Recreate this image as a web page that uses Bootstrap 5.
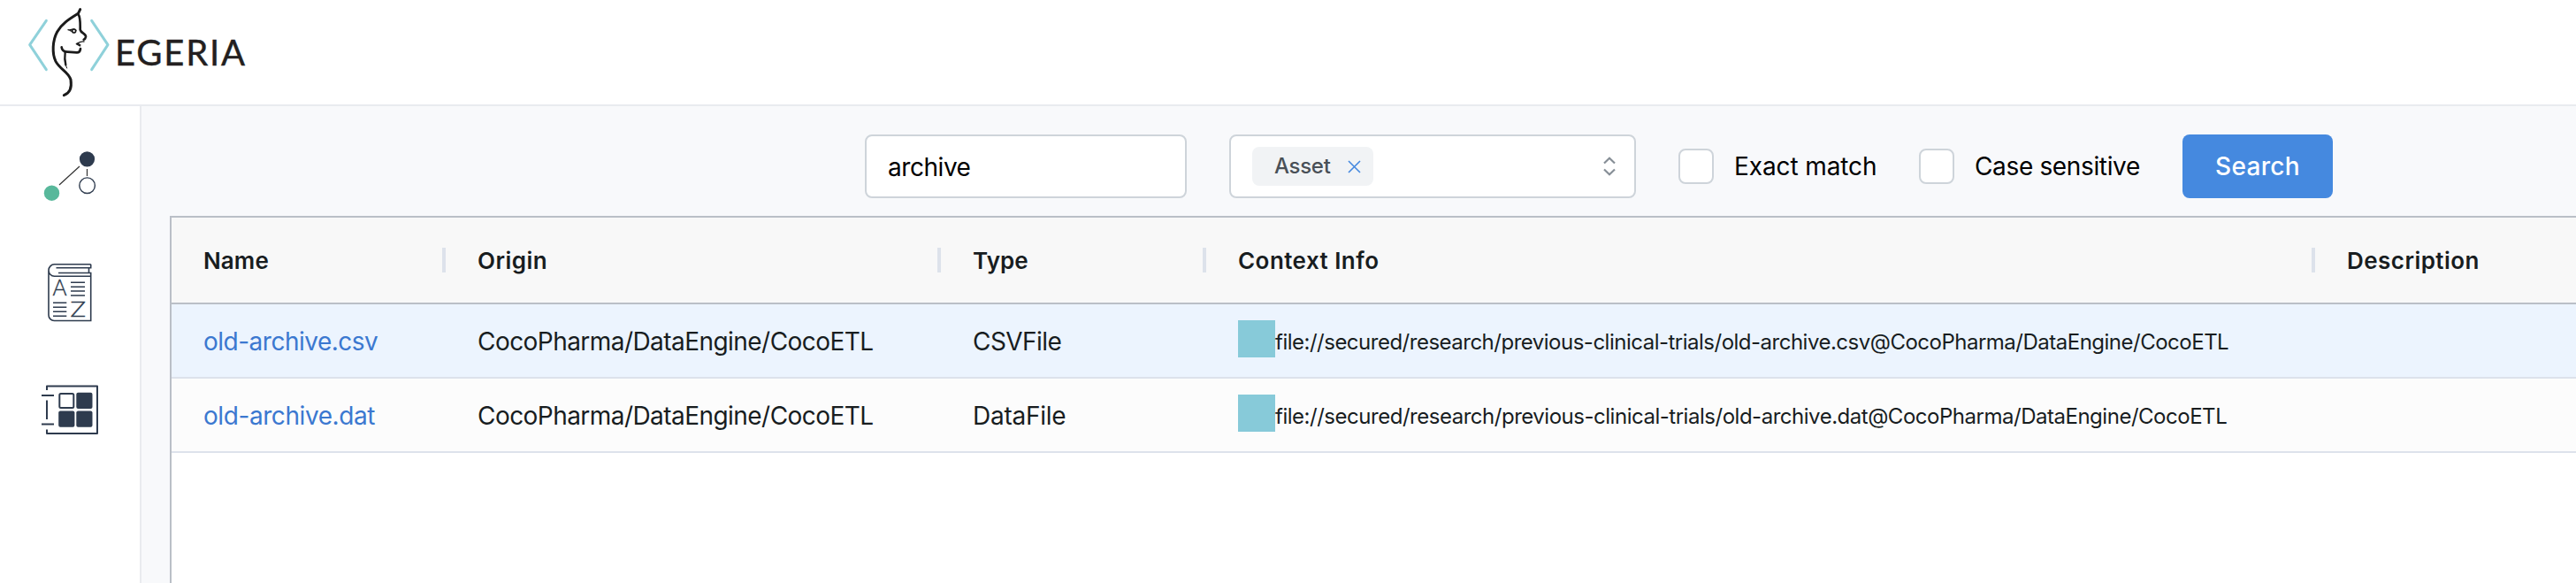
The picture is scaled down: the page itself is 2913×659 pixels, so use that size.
<!DOCTYPE html>
<html lang="en">
<head>
<meta charset="utf-8">
<meta name="viewport" content="width=device-width, initial-scale=1">
<title>Egeria</title>
<link href="https://cdn.jsdelivr.net/npm/bootstrap@5.3.0/dist/css/bootstrap.min.css" rel="stylesheet">
<script src="https://cdn.jsdelivr.net/npm/bootstrap@5.3.0/dist/js/bootstrap.bundle.min.js"></script>
<style>
  body { font-family: Inter, "Liberation Sans", sans-serif; font-size: 28px; line-height: 40px; letter-spacing: -.5px; color: #000; overflow: hidden; }
  .topbar { height: 120px; border-bottom: 2px solid #e9ebef; padding: 7px 0 0 30px; }
  .wordmark { font: 400 40px/48px Lato, sans-serif; letter-spacing: 1.8px; color: #231f20; margin: 28px 0 0 4px; -webkit-text-stroke: .4px #231f20; }
  .sidebar { width: 160px; border-right: 2px solid #e9ebef; }
  .content-area { background: #f8f9fb; padding: 32px 0 0 32px; }
  .filters { height: 92px; padding-left: 786px; }
  .filters .form-control { width: 364px; height: 72px; border: 2px solid #ced4da; border-radius: 8px; padding: 2px 24px 0; font-size: 28px; letter-spacing: -.45px; color: #000; margin-right: 48px; }
  .type-select { width: 460px; height: 72px; border: 2px solid #ced4da; border-radius: 8px; padding: 0 20px 0 24px; margin-right: 48px; background: #fff; }
  .chip { height: 44px; width: 137px; border-radius: 8px; background: #f1f3f5; color: #495057; font-size: 24px; font-weight: 500; letter-spacing: -.3px; padding: 0 14px 0 25px; }
  .check-label { height: 72px; }
  .check-exact { width: 272px; letter-spacing: -.1px; }
  .check-case { width: 298px; letter-spacing: -.35px; }
  .filters .form-check-input { width: 40px; height: 40px; margin: 0 23px 0 0; border: 2px solid #ced4da; border-radius: 8px; background: #fff; }
  .btn-search { width: 170px; height: 72px; border-radius: 8px; border: 0; background: #4589df; color: #fff; font-size: 28px; font-weight: 500; letter-spacing: .35px; padding: 0; }
  .btn-search:hover { background: #3a7cd0; color: #fff; }
  .grid-panel { background: #fff; border: 2px solid #babfc7; border-width: 2px 0 0 2px; }
  .asset-grid { table-layout: fixed; border-collapse: separate; border-spacing: 0; --bs-table-bg: transparent; }
  .asset-grid th, .asset-grid td { padding: 0 36px; vertical-align: middle; white-space: nowrap; color: #181d1f; }
  .asset-grid th { height: 98px; background: #f8f8f8; border-bottom: 2px solid #babfc7; font-size: 26px; font-weight: 600; letter-spacing: .45px; padding-right: 0; }
  .asset-grid th span { padding-top: 2px; }
  .asset-grid th.tight { letter-spacing: .1px; }
  .asset-grid td { height: 84px; background: #fcfcfc; border-bottom: 2px solid #dde2eb; letter-spacing: -.55px; padding-top: 2px; }
  .asset-grid td.loose { letter-spacing: -.25px; }
  .asset-grid .hovered td { background: #ecf4fe; }
  .asset-grid a { color: #3b78d0; text-decoration: none; letter-spacing: -.5px; }
  .asset-grid .plain a { letter-spacing: -.42px; }
  .asset-grid .plain .path-text { letter-spacing: -.48px; }
  .col-sep { width: 4px; height: 28px; background: #dde2eb; }
  .swatch { width: 42px; height: 42px; background: #87cad9; margin-bottom: 6px; }
  .path-text { font-size: 24px; letter-spacing: -.5px; padding-top: 2px; }
</style>
</head>
<body class="vh-100 d-flex flex-column">

<header class="topbar d-flex align-items-start bg-white flex-shrink-0">
  <svg width="96" height="103" viewBox="90 21 288 309" fill="none" stroke-linecap="round" stroke-linejoin="round">
    <g stroke="#8fd1da" stroke-width="9">
      <path d="M157 70 101 152 157 236M311 70 366 152 311 236"/>
    </g>
    <g stroke="#1b1b1b" stroke-width="8">
      <path stroke-width="9" d="M272 32 265 46C238 63 210 79 194 108C178 137 176 182 189 208C204 236 233 244 240 270C244 296 236 316 217 323"/>
      <path d="M265 47C274 60 272 83 272 101C275 114 292 113 291 125C290 130 287 133 284 134"/>
      <path stroke-width="4" d="M285 141C277 140 268 143 259 149L271 156"/>
      <path d="M264 148 272 153" stroke-width="5"/>
      <path d="M273 165C272 173 270 178 261 178L229 176C218 176 210 170 209 160"/>
      <path stroke-width="7" d="M221 178C219 192 220 208 223 220"/>
      <path stroke-width="3" d="M222 218 227 231"/>
      <path stroke-width="4" d="M231 101C240 104 250 93 258 103M237 103 244 106"/>
      <circle cx="251" cy="105" r="6" stroke-width="5"/>
    </g>
  </svg>
  <span class="wordmark">EGERIA</span>
</header>

<div class="d-flex flex-grow-1">
  <nav class="sidebar bg-white flex-shrink-0">
    <svg width="158" height="390" viewBox="0 120 158 390" fill="none" stroke="#2e3b4e" class="d-block">
      <!-- lineage -->
      <circle cx="98.5" cy="179.8" r="8.6" fill="#2e3b4e" stroke="none"/>
      <circle cx="58.5" cy="218.2" r="8.7" fill="#58b89b" stroke="none"/>
      <circle cx="98.6" cy="209.7" r="8.8" stroke-width="1.4"/>
      <path d="M67 209 90 188M98.5 191v8" stroke="#333" stroke-width="1.2"/>
      <!-- glossary -->
      <path stroke-width="1.6" d="M102.7 298.8H61.5A6.7 6.7 0 0 0 55 305.5V356a6.3 6.3 0 0 0 6.5 6.5h41.2V308.5H66M102.7 298.8v4H63.5M100.5 303v5M102.7 312.3H61.5A6.7 6.7 0 0 1 55 305.5"/>
      <path stroke-width="1.6" d="M80 319.2h16M80 324.2h16M80 329h16M80 334h16M60 342.3h15.3M60 347.3h15.3M60 352.2h15.3M60 357.2h15.3"/>
      <g fill="#2e3b4e" stroke="#2e3b4e" stroke-width=".4" font-family="Lato, sans-serif" font-weight="300" font-size="25" letter-spacing="0">
        <text x="59.6" y="334.4" textLength="16" lengthAdjust="spacingAndGlyphs">A</text>
        <text x="79.6" y="358" font-size="22.5" textLength="17.5" lengthAdjust="spacingAndGlyphs">Z</text>
      </g>
      <!-- asset catalog -->
      <path stroke-width="2" stroke-linejoin="round" d="M53 441v-4.500h57V490H53v-4.500M53 452.500V474M47 447h14M47 479.500h14"/>
      <rect x="67.300" y="445" width="16" height="16" rx="1.500" stroke-width="2"/>
      <g fill="#2e3b4e" stroke="none">
        <rect x="86.300" y="443.800" width="18.200" height="18.200" rx="2"/>
        <rect x="66.200" y="464.600" width="18.200" height="18.200" rx="2"/>
        <rect x="86.300" y="464.600" width="18.200" height="18.200" rx="2"/>
      </g>
    </svg>
  </nav>

  <main class="content-area flex-grow-1 d-flex flex-column overflow-hidden">
    <form class="filters d-flex align-items-start flex-shrink-0">
      <input type="text" class="form-control flex-shrink-0" value="archive" aria-label="Query">
      <div class="type-select d-flex align-items-center justify-content-between flex-shrink-0">
        <div class="chip d-flex align-items-center justify-content-between">
          Asset
          <svg width="15" height="15" viewBox="0 0 15 15" stroke="#4589df" stroke-width="1.600"><path d="M1 1 14 14M14 1 1 14"/></svg>
        </div>
        <svg width="16" height="24" viewBox="0 0 16 24" fill="none" stroke="#868e96" stroke-width="2.200"><path d="M2 8.500 8 2.800 14 8.500M2 15.500 8 21.200 14 15.500"/></svg>
      </div>
      <label class="check-label check-exact d-flex align-items-center">
        <input type="checkbox" class="form-check-input"><span>Exact match</span>
      </label>
      <label class="check-label check-case d-flex align-items-center">
        <input type="checkbox" class="form-check-input"><span>Case sensitive</span>
      </label>
      <button type="button" class="btn btn-search">Search</button>
    </form>

    <section class="grid-panel flex-grow-1">
      <table class="asset-grid table mb-0">
        <colgroup><col style="width:310px"><col style="width:560px"><col style="width:300px"><col style="width:1254px"><col></colgroup>
        <thead>
          <tr>
            <th class="tight"><div class="d-flex align-items-center justify-content-between"><span>Name</span><i class="col-sep"></i></div></th>
            <th><div class="d-flex align-items-center justify-content-between"><span>Origin</span><i class="col-sep"></i></div></th>
            <th class="tight"><div class="d-flex align-items-center justify-content-between"><span>Type</span><i class="col-sep"></i></div></th>
            <th><div class="d-flex align-items-center justify-content-between"><span>Context Info</span><i class="col-sep"></i></div></th>
            <th><div class="d-flex align-items-center"><span>Description</span></div></th>
          </tr>
        </thead>
        <tbody>
          <tr class="hovered">
            <td><a href="#">old-archive.csv</a></td>
            <td>CocoPharma/DataEngine/CocoETL</td>
            <td>CSVFile</td>
            <td><div class="d-flex align-items-center"><span class="swatch"></span><span class="path-text">file://secured/research/previous-clinical-trials/old-archive.csv@CocoPharma/DataEngine/CocoETL</span></div></td>
            <td></td>
          </tr>
          <tr class="plain">
            <td><a href="#">old-archive.dat</a></td>
            <td>CocoPharma/DataEngine/CocoETL</td>
            <td class="loose">DataFile</td>
            <td><div class="d-flex align-items-center"><span class="swatch"></span><span class="path-text">file://secured/research/previous-clinical-trials/old-archive.dat@CocoPharma/DataEngine/CocoETL</span></div></td>
            <td></td>
          </tr>
        </tbody>
      </table>
    </section>
  </main>
</div>
</body>
</html>
